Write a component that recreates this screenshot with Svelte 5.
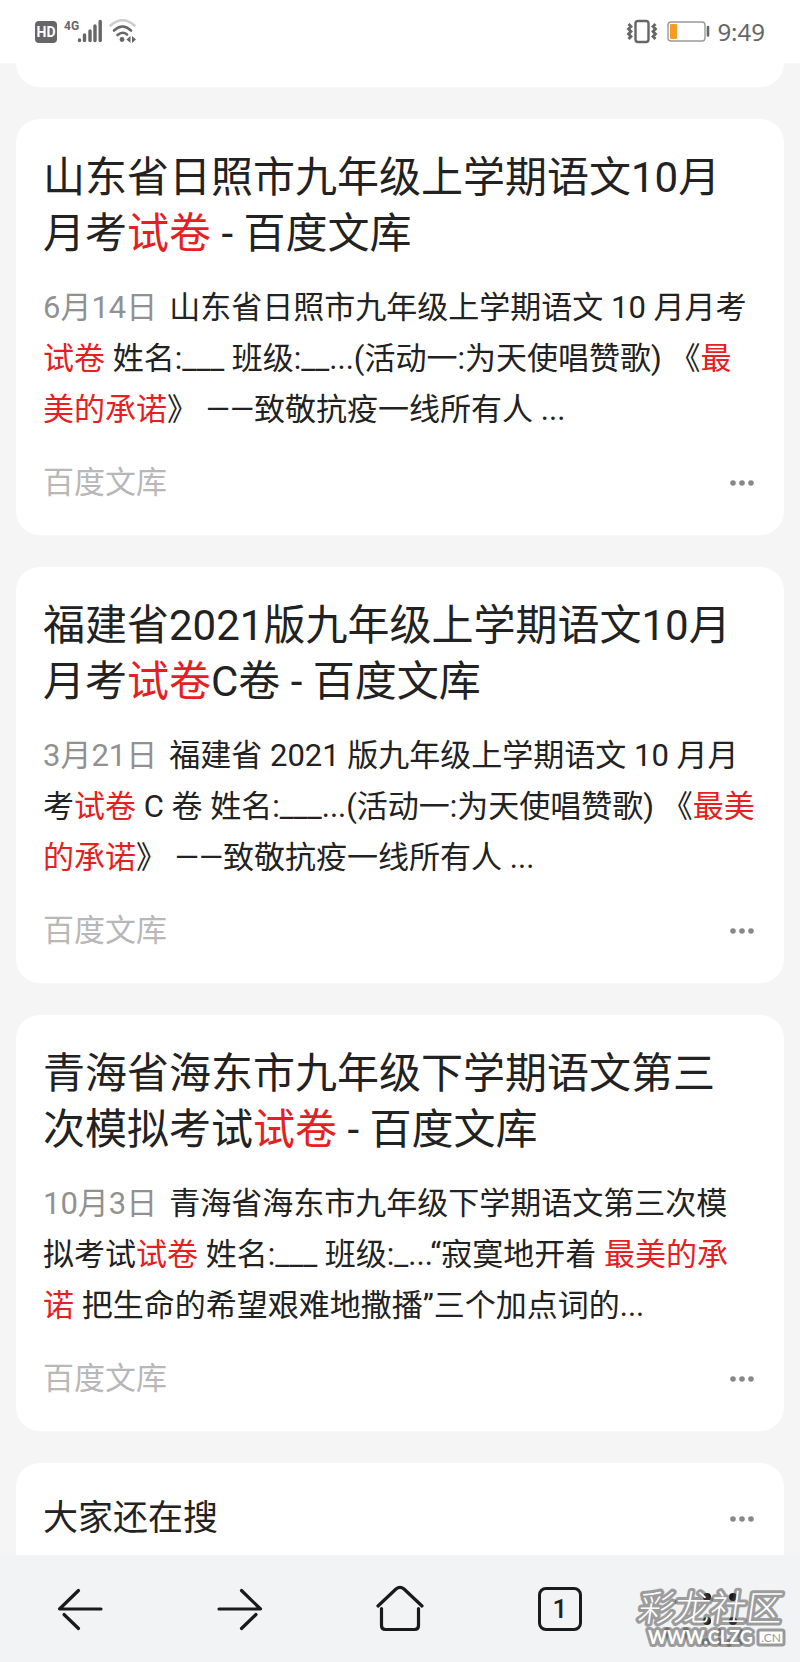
<script>
  // Text is kept as runs so the matched keywords can be marked.
  const results = [
    {
      title: [{ t: '山东省日照市九年级上学期语文10月月考' }, { t: '试卷', hit: true }, { t: ' - 百度文库' }],
      date: '6月14日',
      body: [
        { t: '山东省日照市九年级上学期语文 10 月月考' },
        { t: '试卷', hit: true },
        { t: ' 姓名:___ 班级:__...(活动一:为天使唱赞歌) 《' },
        { t: '最美的承诺', hit: true },
        { t: '》 ——致敬抗疫一线所有人 ...' },
      ],
      source: '百度文库',
    },
    {
      title: [{ t: '福建省2021版九年级上学期语文10月月考' }, { t: '试卷', hit: true }, { t: 'C卷 - 百度文库' }],
      date: '3月21日',
      body: [
        { t: '福建省 2021 版九年级上学期语文 10 月月考' },
        { t: '试卷', hit: true },
        { t: ' C 卷 姓名:___...(活动一:为天使唱赞歌) 《' },
        { t: '最美的承诺', hit: true },
        { t: '》 ——致敬抗疫一线所有人 ...' },
      ],
      source: '百度文库',
    },
    {
      title: [{ t: '青海省海东市九年级下学期语文第三次模拟考试' }, { t: '试卷', hit: true }, { t: ' - 百度文库' }],
      date: '10月3日',
      body: [
        { t: '青海省海东市九年级下学期语文第三次模拟考试' },
        { t: '试卷', hit: true },
        { t: ' 姓名:___ 班级:_...“寂寞地开着 ' },
        { t: '最美的承诺', hit: true },
        { t: ' 把生命的希望艰难地撒播”三个加点词的...' },
      ],
      source: '百度文库',
    },
  ];

  let tabCount = $state(1);
</script>

{#snippet runs(parts)}
  {#each parts as part}{#if part.hit}<em>{part.t}</em>{:else}{part.t}{/if}{/each}
{/snippet}

{#snippet more()}
  <button type="button" class="more" aria-label="更多">
    <svg width="24" height="8" viewBox="0 0 24 8" fill="#888">
      <circle cx="3" cy="4" r="2.8" />
      <circle cx="12" cy="4" r="2.8" />
      <circle cx="21" cy="4" r="2.8" />
    </svg>
  </button>
{/snippet}

<div class="screen">
  <header class="status">
    <svg width="104" height="28" viewBox="0 0 104 28" fill="#666" aria-hidden="true">
      <rect x="0" y="3" width="22" height="22" rx="4" />
      <text class="hd" x="11" y="19" text-anchor="middle" fill="#fff">HD</text>
      <text class="net" x="29" y="12">4G</text>
      <g stroke="#666" stroke-width="3.4" stroke-linecap="round">
        <path d="M44.5 22v.6M49.5 17v5.6M55 13v9.6M60 8v14.6M65.2 3.5v19.1" />
      </g>
      <g fill="none" stroke-linecap="round" stroke-width="2.6">
        <path d="M75.5 7.5Q87.5-3 99.5 7.5" stroke="#ccc" />
        <path d="M79 12.5Q87.5 4.5 96 12.5" stroke="#666" />
        <path d="M82.5 17Q87.5 12.8 92 16.5" stroke="#666" />
      </g>
      <circle cx="87" cy="21.5" r="2.4" />
      <path d="M95.5 18v7l-4-3.5zM97 18v7l4-3.5z" />
    </svg>
    <div class="status-right">
      <svg width="84" height="28" viewBox="0 0 84 28" fill="none" stroke="#666" aria-hidden="true">
        <rect x="10.500" y="3" width="13" height="21" rx="2.5" stroke-width="2.4" />
        <path d="M3.500 6l2.500 2.500-2.500 2.500 2.500 2.500-2.500 2.500 2.500 2.500-2.500 2.500M30.500 6l-2.500 2.500 2.500 2.500-2.500 2.500 2.500 2.500-2.500 2.500 2.500 2.500" stroke-width="2.8" />
        <rect x="43" y="4" width="37" height="19" rx="3" stroke="#999" stroke-width="1.4" />
        <rect x="45" y="6" width="7" height="15" rx="1" fill="#f79a26" stroke="none" />
        <path d="M83 9v8.500" stroke-width="2.6" stroke-linecap="round" />
      </svg>
      <time>9:49</time>
    </div>
  </header>

  <main>
    <div class="card tail"></div>

    {#each results as r}
      <article class="card">
        <h2>{@render runs(r.title)}</h2>
        <p class="body"><span class="date">{r.date}</span>{@render runs(r.body)}</p>
        <div class="foot">
          <span class="source">{r.source}</span>
          {@render more()}
        </div>
      </article>
    {/each}

    <section class="card related">
      <h3>大家还在搜</h3>
      {@render more()}
    </section>
  </main>

  <nav>
    <button type="button" aria-label="后退">
      <svg width="48" height="48" viewBox="0 0 48 48">
        <path d="M22.5 5.500L3.500 24H45M8 29.500L22.500 43.500" />
      </svg>
    </button>
    <button type="button" aria-label="前进">
      <svg width="48" height="48" viewBox="0 0 48 48">
        <path d="M25.500 5.500L44.500 24H3M40 29.500L25.500 43.500" />
      </svg>
    </button>
    <button type="button" aria-label="主页">
      <svg width="48" height="48" viewBox="0 0 48 48">
        <path d="M2 21L20 4q4-3.400 8 0L46 21M5.500 23.500V40.500q0 4 4 4H38.500q4 0 4-4V23.500" />
      </svg>
    </button>
    <button type="button" aria-label="标签页">
      <span class="tabs">{tabCount}</span>
    </button>
    <button type="button" aria-label="菜单">
      <svg class="solid" width="48" height="48" viewBox="0 0 48 48">
        <circle cx="11" cy="12" r="4" />
        <circle cx="37" cy="12" r="4" />
        <circle cx="11" cy="36" r="4" />
        <circle cx="37" cy="36" r="4" />
      </svg>
    </button>

    <svg class="mark" width="156" height="76" viewBox="0 -10 156 76">
      <g class="outlined">
        <text class="mark-name" transform="skewX(-8)" x="8" y="35">彩龙社区</text>
        <text class="mark-url" x="14" y="58">WWW.CLZG</text>
      </g>
      <rect x="124" y="44" width="26" height="15" rx="2" fill="#fff" stroke="#999" stroke-width="3" />
      <text class="mark-cn" x="137" y="56" text-anchor="middle">.CN</text>
    </svg>
  </nav>
</div>

<style>
  :global(body) {
    margin: 0;
    background: #f5f5f5;
  }

  .screen {
    min-height: 100vh;
    display: flex;
    flex-direction: column;
    background: #f5f5f5;
    color: #222;
    font-family: Roboto, 'Noto Sans CJK SC', sans-serif;
  }

  .status {
    display: flex;
    align-items: center;
    justify-content: space-between;
    height: 63px;
    padding: 0 35px;
    box-sizing: border-box;
    background: #fff;
  }

  .status-right {
    display: flex;
    align-items: center;
    gap: 8px;
  }

  .status-right svg {
    overflow: visible;
  }

  .status time {
    font-family: 'Noto Sans', sans-serif;
    font-size: 24px;
    line-height: 32px;
    color: #666;
  }

  .hd {
    font-size: 14px;
    font-weight: 700;
  }

  .net {
    font-size: 12px;
    font-weight: 700;
  }

  main {
    flex: 1;
    display: flex;
    flex-direction: column;
    gap: 32px;
    padding: 0 16px;
  }

  .card {
    padding: 31px 28px 30px 27px;
    border-radius: 24px;
    background: #fff;
  }

  .card.tail {
    height: 24px;
    padding: 0;
    border-radius: 0 0 24px 24px;
  }

  h2,
  h3,
  p {
    margin: 0;
    font-weight: 400;
  }

  h2 {
    font-size: 42px;
    line-height: 56px;
  }

  em {
    font-style: normal;
    color: #e62021;
  }

  .body {
    margin-top: 20px;
    font-size: 31px;
    line-height: 51px;
  }

  .date {
    margin-right: 12px;
    color: #919191;
  }

  .foot {
    display: flex;
    align-items: center;
    justify-content: space-between;
    margin-top: 25px;
  }

  .source {
    font-size: 31px;
    line-height: 45px;
    color: #b8b8b8;
  }

  button {
    padding: 0;
    border: none;
    background: none;
    color: inherit;
    font-family: inherit;
    cursor: pointer;
  }

  .more {
    display: flex;
    align-items: center;
    height: 44px;
    padding: 0 2px;
  }

  .related {
    flex: 1;
    display: flex;
    align-items: flex-start;
    justify-content: space-between;
    padding-bottom: 11px;
    border-radius: 24px 24px 0 0;
  }

  .related h3 {
    font-size: 35px;
    line-height: 50px;
  }

  .related .more {
    height: 50px;
  }

  nav {
    position: relative;
    display: grid;
    grid-template-columns: repeat(5, 1fr);
    height: 107px;
    background: #f2f3f5;
  }

  nav button {
    display: flex;
    align-items: center;
    justify-content: center;
  }

  nav button svg {
    fill: none;
    stroke: #1a1a1a;
    stroke-width: 3.2;
    stroke-linecap: round;
    stroke-linejoin: round;
  }

  nav button svg.solid {
    fill: #1a1a1a;
    stroke: none;
  }

  .tabs {
    width: 44px;
    height: 44px;
    box-sizing: border-box;
    border: 3px solid #1a1a1a;
    border-radius: 8px;
    font-size: 26px;
    font-weight: 500;
    line-height: 38px;
  }

  /* Site watermark printed over the corner of the toolbar */
  .mark {
    position: absolute;
    right: 10px;
    bottom: 10px;
    pointer-events: none;
  }

  .outlined {
    fill: #fff;
    stroke: rgba(70, 70, 70, 0.5);
    stroke-width: 6;
    stroke-linejoin: round;
    paint-order: stroke;
  }

  .mark-name {
    font-family: 'Noto Sans CJK SC', sans-serif;
    font-size: 36px;
    font-weight: 300;
  }

  .mark-url {
    font-family: Lato, sans-serif;
    font-size: 18px;
    font-weight: 700;
  }

  .mark-cn {
    fill: #999;
    font-family: Lato, sans-serif;
    font-size: 12px;
  }
</style>
